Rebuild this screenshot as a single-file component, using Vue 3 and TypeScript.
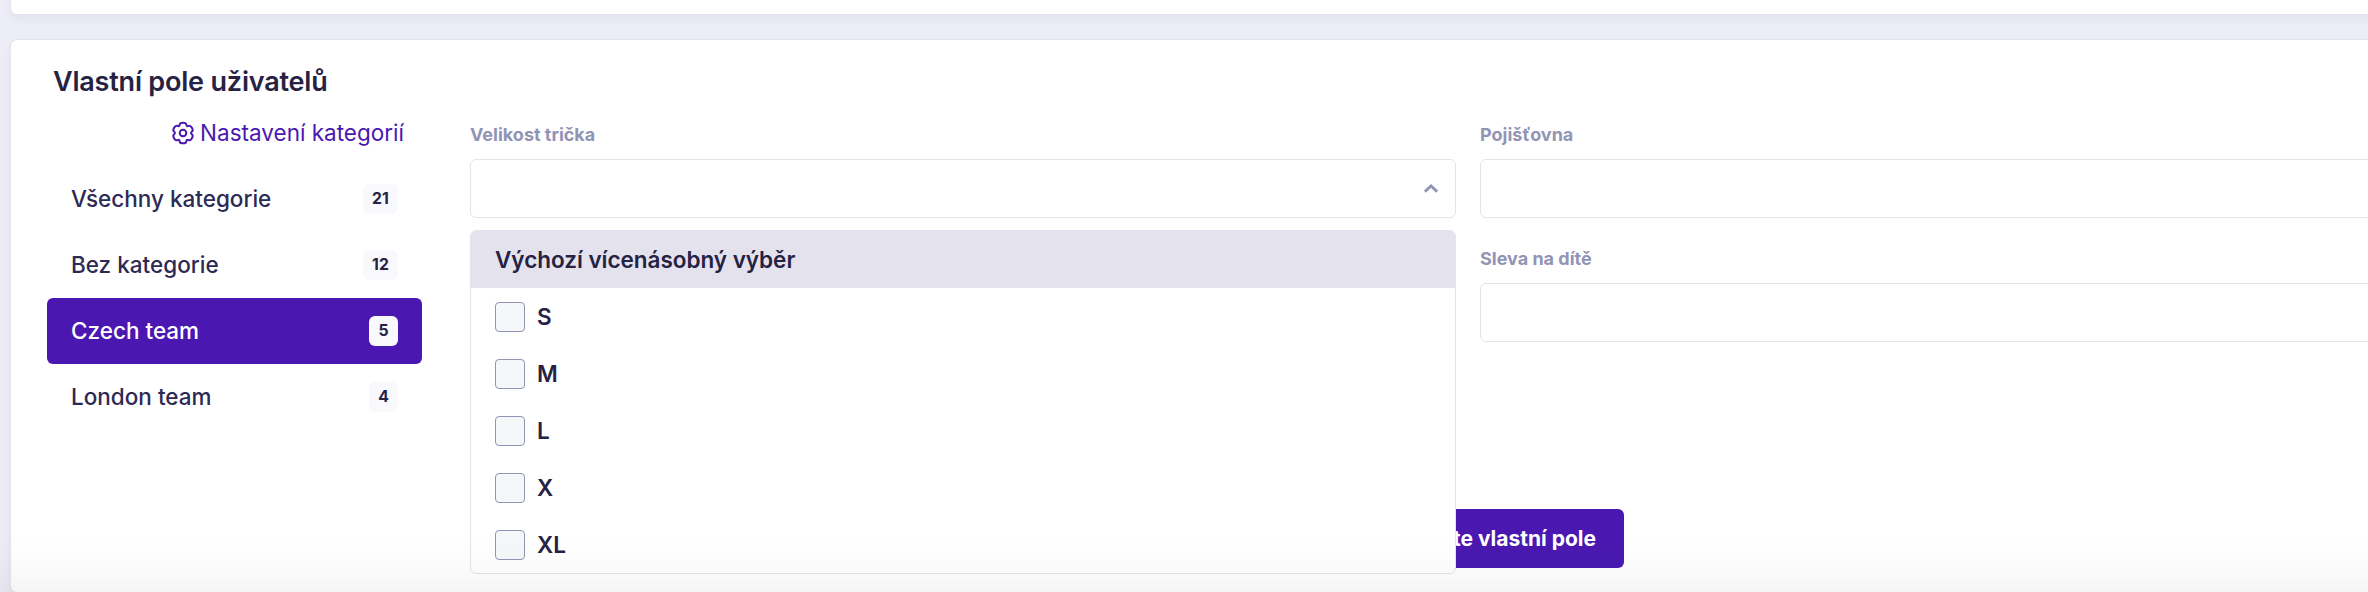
<script setup lang="ts">
interface Category {
  name: string
  count: number
  active?: boolean
}

const categories: Category[] = [
  { name: 'Všechny kategorie', count: 21 },
  { name: 'Bez kategorie', count: 12 },
  { name: 'Czech team', count: 5, active: true },
  { name: 'London team', count: 4 },
]

const sizes: string[] = ['S', 'M', 'L', 'X', 'XL']

// Six-lobed gear outline: a closed quadratic curve around the control points.
function gearPath(cx: number, cy: number, outer: number, inner: number): string {
  const points: [number, number][] = []
  const add = (deg: number, r: number) => {
    const a = (deg * Math.PI) / 180
    points.push([cx + r * Math.cos(a), cy + r * Math.sin(a)])
  }
  for (let k = 0; k < 6; k++) {
    const mid = -90 + k * 60
    add(mid - 17, outer)
    add(mid + 17, outer)
    add(mid + 30, inner)
  }
  const middle = (i: number) => {
    const [ax, ay] = points[i % points.length]
    const [bx, by] = points[(i + 1) % points.length]
    return `${((ax + bx) / 2).toFixed(2)} ${((ay + by) / 2).toFixed(2)}`
  }
  let d = `M${middle(0)}`
  for (let i = 1; i <= points.length; i++) {
    const [x, y] = points[i % points.length]
    d += `Q${x.toFixed(2)} ${y.toFixed(2)} ${middle(i)}`
  }
  return d + 'Z'
}

const gear = gearPath(12, 12, 10.8, 7.2)
</script>

<template>
  <div class="page">
    <section class="card card-previous"></section>
    <section class="card card-main">
      <h2 class="title">Vlastní pole uživatelů</h2>
      <div class="columns">
        <aside class="sidebar">
          <a class="settings">
            <svg class="gear" viewBox="0 0 24 24" fill="none" stroke="currentColor" stroke-width="2">
              <path :d="gear" />
              <circle cx="12" cy="12" r="3.3" />
            </svg>
            <span>Nastavení kategorií</span>
          </a>
          <nav class="categories">
            <a v-for="c in categories" :key="c.name" class="category" :class="{ active: c.active }">
              <span class="category-name">{{ c.name }}</span>
              <span class="badge">{{ c.count }}</span>
            </a>
          </nav>
        </aside>
        <main class="content">
          <div class="fields">
            <div class="field field-size">
              <label class="label">Velikost trička</label>
              <div class="input">
                <svg class="chevron" viewBox="0 0 14 9" fill="none" stroke="currentColor" stroke-width="2.8">
                  <path d="M0.9 7.7L7 1.9l6.1 5.8" />
                </svg>
              </div>
              <div class="dropdown">
                <div class="dropdown-head">Výchozí vícenásobný výběr</div>
                <div v-for="s in sizes" :key="s" class="option">
                  <span class="checkbox"></span>
                  <span>{{ s }}</span>
                </div>
              </div>
            </div>
            <div class="field">
              <label class="label">Pojišťovna</label>
              <div class="input"></div>
            </div>
            <div class="field field-discount">
              <label class="label">Sleva na dítě</label>
              <div class="input"></div>
            </div>
          </div>
          <div class="actions">
            <button class="add">Přidejte vlastní pole</button>
          </div>
        </main>
      </div>
    </section>
    <div class="fade"></div>
  </div>
</template>

<style>
body {
  margin: 0;
  overflow: hidden;
}
</style>

<style scoped>
.page {
  position: relative;
  box-sizing: border-box;
  width: 2368px;
  height: 592px;
  padding-left: 11px;
  overflow: hidden;
  background: #ededf7;
  color: #252244;
  font-family: Inter, 'Liberation Sans', sans-serif;
  font-size: 22.5px;
}
.card {
  box-sizing: border-box;
  width: 2520px;
  background: #fff;
  border-radius: 6px;
  box-shadow: 0 0 0 1px #e4e3ee, 0 4px 12px rgba(37, 34, 68, 0.06);
}
.card-previous {
  height: 14px;
  border-radius: 0 0 6px 6px;
  margin-bottom: 26px;
}
.card-main {
  height: 552px;
  padding: 24px 54px 0 36px;
}
.title {
  margin: 0 0 0 6px;
  font-size: 27px;
  line-height: 36px;
  font-weight: 600;
  letter-spacing: -0.2px;
}
.columns {
  display: flex;
  gap: 48px;
}
.sidebar {
  flex: 0 0 375px;
}
.settings {
  display: flex;
  justify-content: flex-end;
  align-items: center;
  gap: 5.5px;
  height: 36px;
  margin-top: 14px;
  padding-right: 18px;
  color: #4a18b0;
}
.gear {
  width: 24px;
  height: 24px;
  margin-top: 1px;
}
.categories {
  margin-top: 16px;
}
.category {
  display: flex;
  align-items: center;
  justify-content: space-between;
  height: 66px;
  padding: 0 24px;
  border-radius: 6px;
  box-sizing: border-box;
  font-weight: 500;
  color: #2d2a54;
}
.category-name {
  padding-bottom: 1px;
}
.category.active {
  background: #4a18b0;
  color: #fff;
}
.badge {
  box-sizing: border-box;
  min-width: 29px;
  height: 30px;
  padding: 0 9.2px;
  border-radius: 6px;
  background: #f8f8fd;
  color: #252244;
  font-size: 15.75px;
  line-height: 29px;
  font-weight: 700;
  text-align: center;
}
.content {
  flex: 0 0 1996px;
}
.fields {
  display: grid;
  grid-template-columns: 986px 986px;
  column-gap: 24px;
  padding-top: 21px;
}
.field {
  height: 124px;
}
.field-size {
  position: relative;
  z-index: 2;
}
.field-discount {
  grid-column: 2;
}
.label {
  display: block;
  height: 38px;
  line-height: 28px;
  font-size: 18px;
  font-weight: 700;
  color: #9294b5;
}
.input {
  box-sizing: border-box;
  display: flex;
  align-items: center;
  justify-content: flex-end;
  height: 59px;
  padding-right: 17px;
  border: 1px solid #e4e3ee;
  border-radius: 6px;
}
.chevron {
  width: 14px;
  height: 9px;
  color: #9294b5;
}
.dropdown {
  position: absolute;
  top: 109px;
  left: 0;
  box-sizing: border-box;
  width: 986px;
  height: 344px;
  border: 1px solid #e4e3ee;
  border-radius: 6px;
  background: #fff;
  overflow: hidden;
  font-weight: 600;
  letter-spacing: -0.03px;
}
.dropdown-head {
  height: 57px;
  padding-left: 24px;
  line-height: 57px;
  background: #e4e3ed;
}
.option {
  display: flex;
  align-items: center;
  gap: 12px;
  height: 57px;
  padding-left: 24px;
}
.checkbox {
  box-sizing: border-box;
  width: 30px;
  height: 30px;
  border: 1px solid #9294b5;
  border-radius: 4px;
  background: #f6f7f9;
}
.actions {
  margin: 140px 0 0 844px;
  width: 310px;
}
.add {
  width: 310px;
  height: 59px;
  padding: 0 28px;
  border: 0;
  border-radius: 6px;
  background: #4a18b0;
  color: #fff;
  font: 700 21px Inter, 'Liberation Sans', sans-serif;
  text-align: right;
}
.fade {
  position: absolute;
  left: 0;
  right: 0;
  bottom: 0;
  height: 60px;
  z-index: 5;
  background: linear-gradient(rgba(0, 0, 0, 0), rgba(0, 0, 0, 0.012) 50%, rgba(0, 0, 0, 0.04));
}
</style>
